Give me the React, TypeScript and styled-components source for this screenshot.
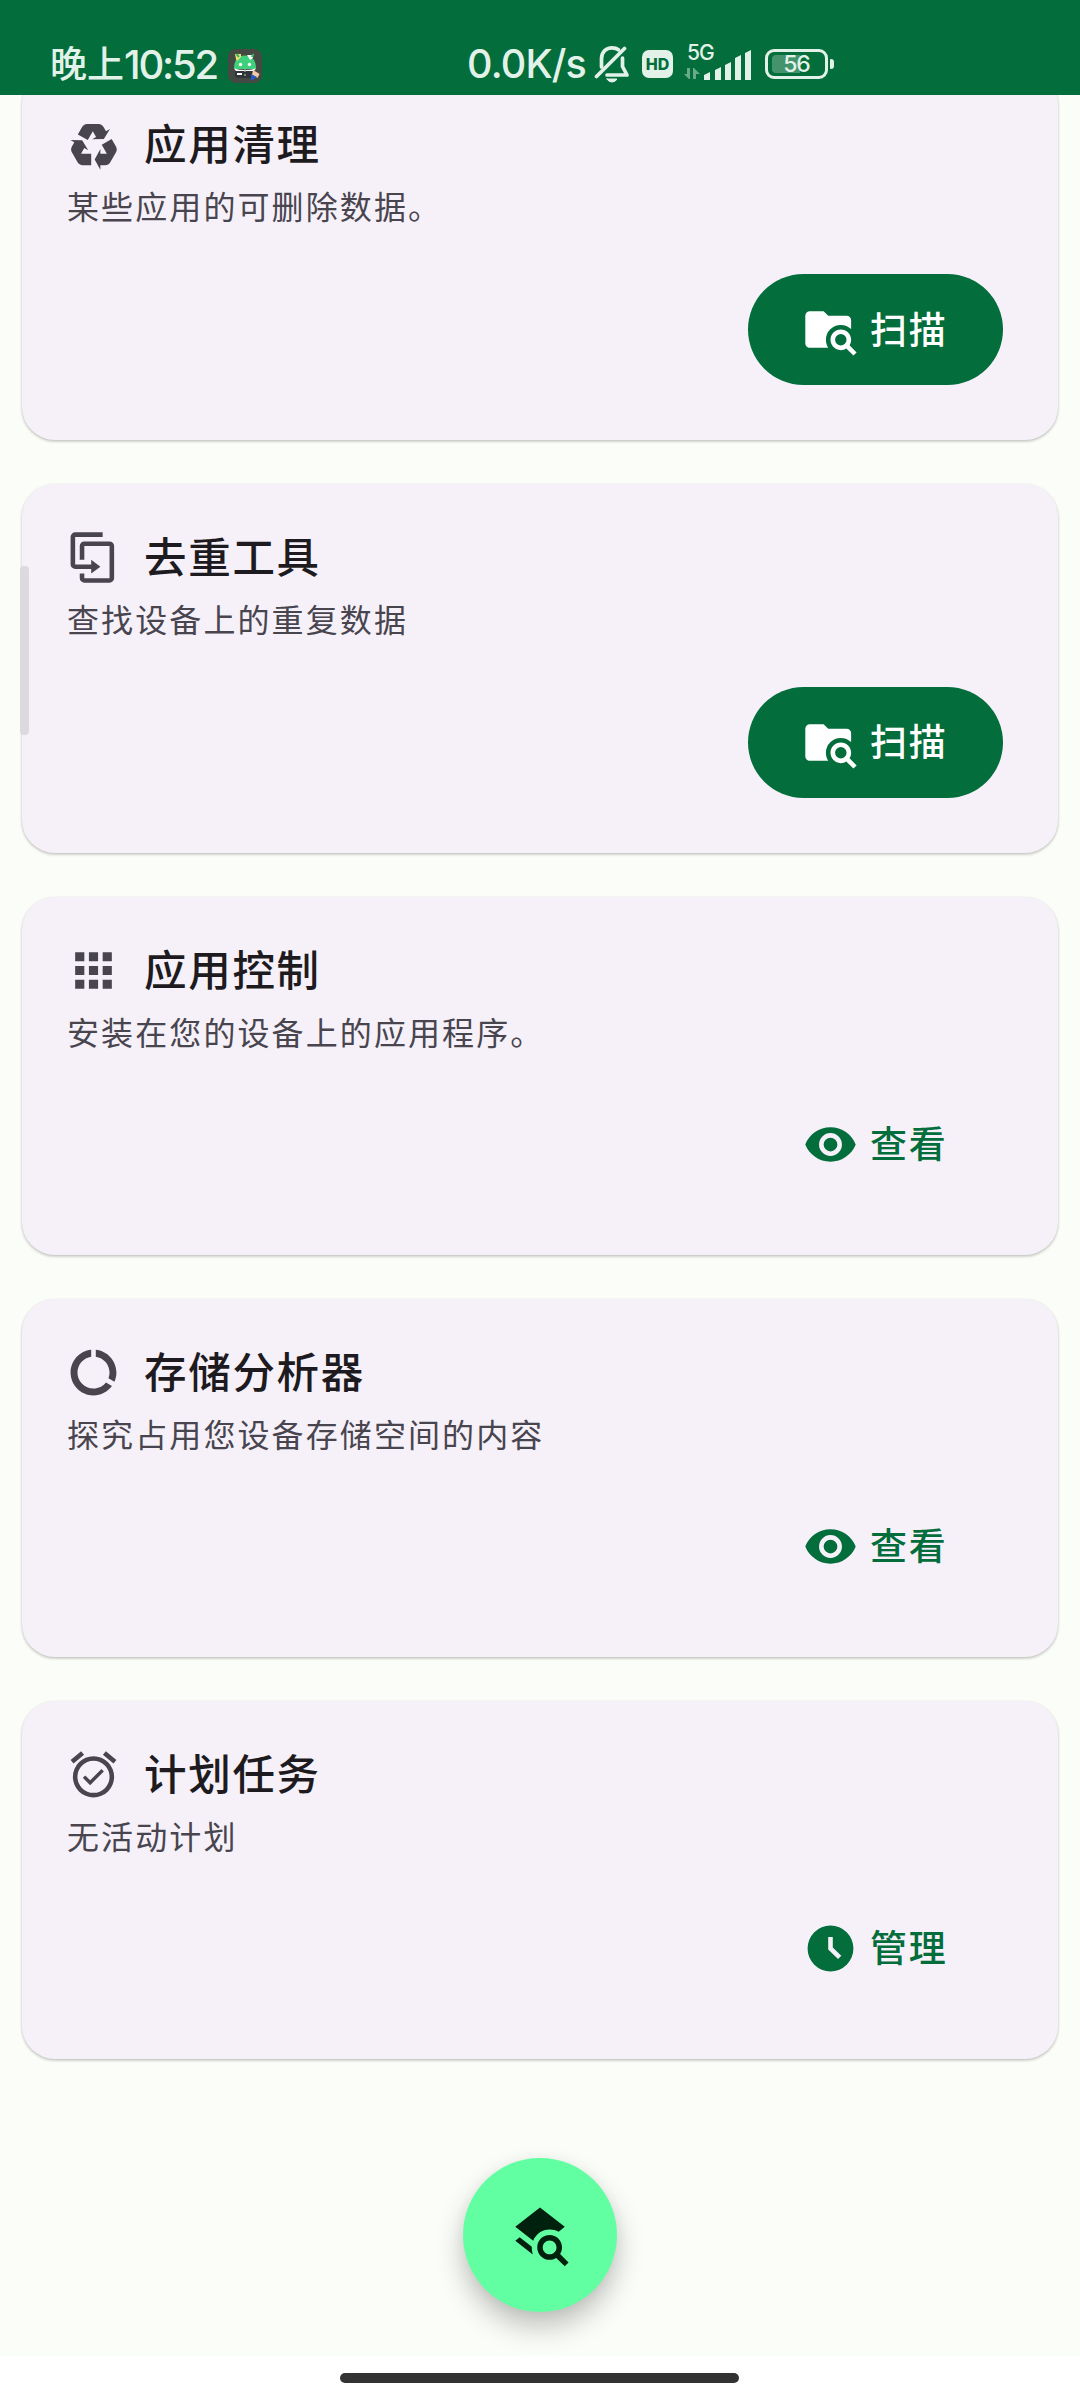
import React from "react";
import styled, { createGlobalStyle } from "styled-components";

const GlobalStyle = createGlobalStyle`
  * { box-sizing: border-box; }
  html, body { margin: 0; padding: 0; background: #fbfef8; }
  body { font-family: "Noto Sans CJK SC", "Noto Sans", sans-serif; overflow: hidden; }
`;

const Screen = styled.div`
  width: 1080px;
  height: 2400px;
  display: flex;
  flex-direction: column;
  background: #fbfef8;
  position: relative;
  overflow: hidden;
`;

const StatusBar = styled.header`
  flex: none;
  height: 95px;
  padding: 33px 50px 0 50px;
  display: flex;
  align-items: center;
  background: #036d3b;
  color: #e2f2e9;
  z-index: 2;
  white-space: nowrap;
  > * { flex: none; }
`;

const Clock = styled.div`
  display: flex;
  align-items: center;
  width: 178px;
  font-size: 37px;
  font-weight: 500;
  line-height: 40px;
`;

const ClockPeriod = styled.span`
  padding-bottom: 4px;
`;

const ClockDigits = styled.span`
  padding-top: 1px;
  font-family: Inter, sans-serif;
  font-size: 40px;
  letter-spacing: -2.2px;
`;

const Speed = styled.span`
  width: 127px;
  margin-left: 205px;
  font: 500 39.5px/40px Inter, sans-serif;
  letter-spacing: -0.8px;
`;

const HdBadge = styled.span`
  width: 31px;
  height: 28px;
  margin-left: 12px;
  border-radius: 7px;
  background: #e2f2e9;
  color: #036d3b;
  font: 800 16px/28px Inter, sans-serif;
  text-align: center;
`;

const Signal = styled.div`
  width: 68px;
  height: 36px;
  margin: -2px 0 0 11px;
  position: relative;
  svg { display: block; }
`;

const NetworkLabel = styled.span`
  position: absolute;
  left: 3px;
  top: -2px;
  font: 500 21px/20px Inter, sans-serif;
  letter-spacing: -1px;
`;

const Battery = styled.div`
  width: 63px;
  height: 30px;
  margin-left: 13px;
  border: 3px solid #e2f2e9;
  border-radius: 9px;
  padding: 3px 4px;
  position: relative;
  &::after {
    content: "";
    position: absolute;
    right: -9px;
    top: 7px;
    width: 4px;
    height: 10px;
    border-radius: 1px 3px 3px 1px;
    background: #e2f2e9;
  }
`;

const BatteryLevel = styled.div`
  width: 28px;
  height: 18px;
  border-radius: 4px 0 0 4px;
  background: #44936c;
`;

const BatteryText = styled.span`
  position: absolute;
  inset: 0;
  text-align: center;
  font: 500 23px/25px Inter, sans-serif;
  letter-spacing: -1.2px;
`;

const List = styled.main`
  flex: 1;
  display: flex;
  flex-direction: column;
  gap: 44px;
  padding: 0 22px;
  margin-top: -24px;
`;

const Card = styled.section<{ $height: number }>`
  flex: none;
  height: ${(p) => p.$height}px;
  padding: 46px 55px 55px 44px;
  border-radius: 33px;
  background: #f6f1f9;
  box-shadow: 0 1px 3px rgba(0, 0, 0, 0.2), 0 2px 3px rgba(0, 0, 0, 0.08);
  display: flex;
  flex-direction: column;
`;

const CardHead = styled.div`
  display: flex;
  align-items: center;
  gap: 23px;
  height: 55px;
  color: #49454f;
`;

const Title = styled.h2`
  margin: 0;
  padding-bottom: 6px;
  color: #1d1b20;
  font-size: 42.5px;
  line-height: 55px;
  font-weight: 500;
  letter-spacing: 1.7px;
`;

const Subtitle = styled.p`
  margin: 10px 0 0 1px;
  color: #49454f;
  font-size: 32px;
  line-height: 46px;
  font-weight: 400;
  letter-spacing: 2.1px;
`;

const Action = styled.button<{ $filled?: boolean }>`
  align-self: flex-end;
  margin-top: auto;
  width: 255px;
  height: 111px;
  padding: 0 0 0 55px;
  border: 0;
  border-radius: 56px;
  display: flex;
  align-items: center;
  gap: 12px;
  background: ${(p) => (p.$filled ? "#036d3b" : "transparent")};
  color: ${(p) => (p.$filled ? "#ffffff" : "#036d3b")};
  font: 500 37px/50px "Noto Sans CJK SC", sans-serif;
  letter-spacing: 1.7px;
  white-space: nowrap;
  svg { flex: none; }
`;

const ActionLabel = styled.span`
  padding-bottom: 4px;
`;

const EdgeHandle = styled.div`
  position: absolute;
  left: 20px;
  top: 566px;
  width: 9px;
  height: 169px;
  border-radius: 4px;
  background: #dddadf;
`;

const Fab = styled.button`
  position: absolute;
  left: 463px;
  top: 2158px;
  width: 154px;
  height: 154px;
  border: 0;
  padding: 0;
  border-radius: 50%;
  background: #61ffa1;
  color: #00210e;
  display: flex;
  align-items: center;
  justify-content: center;
  box-shadow: 0 15px 28px rgba(0, 0, 0, 0.24), 0 2px 14px rgba(0, 0, 0, 0.05);
`;

const NavigationBar = styled.footer`
  flex: none;
  height: 44px;
  background: #ffffff;
  display: flex;
  justify-content: center;
  padding: 17px 2px 0 0;
`;

const HomePill = styled.div`
  width: 399px;
  height: 10px;
  border-radius: 5px;
  background: #333333;
`;

const paths = {
  recycle:
    "M21.82,15.42L19.32,19.75C18.83,20.61 17.92,21.06 17,21H15V23L12.5,18.5L15,14V16H17.82L15.6,12.15L19.93,9.65L21.73,12.77C22.25,13.54 22.32,14.57 21.82,15.42M9.21,3.06H14.21C15.19,3.06 16.04,3.63 16.45,4.45L17.45,6.19L19.18,5.19L16.54,9.6L11.39,9.69L13.12,8.69L11.71,6.24L9.5,10.09L5.16,7.59L6.96,4.47C7.37,3.64 8.22,3.06 9.21,3.06M5.05,19.76L2.55,15.43C2.06,14.58 2.13,13.56 2.64,12.79L3.64,11.06L1.91,10.06L7.05,10.14L9.7,14.56L7.97,13.56L6.56,16H11V21H7.4C6.47,21.07 5.55,20.61 5.05,19.76Z",
  duplicate:
    "M11,17H4A2,2 0 0,1 2,15V3A2,2 0 0,1 4,1H16V3H4V15H11V13L15,16L11,19V17M19,21V7H8V13H6V7A2,2 0 0,1 8,5H19A2,2 0 0,1 21,7V21A2,2 0 0,1 19,23H8A2,2 0 0,1 6,21V19H8V21H19Z",
  apps: "M4,4H8V8H4ZM10,4H14V8H10ZM16,4H20V8H16ZM4,10H8V14H4ZM10,10H14V14H10ZM16,10H20V14H16ZM4,16H8V20H4ZM10,16H14V20H10ZM16,16H20V20H16Z",
  usage:
    "M13 2.05v3.03c3.39.49 6 3.39 6 6.92 0 .9-.18 1.75-.48 2.54l2.6 1.53c.56-1.24.88-2.62.88-4.07 0-5.18-3.95-9.45-9-9.95zM12 19c-3.87 0-7-3.13-7-7 0-3.53 2.61-6.43 6-6.92V2.05c-5.06.5-9 4.76-9 9.95 0 5.52 4.47 10 9.99 10 3.31 0 6.24-1.61 8.06-4.09l-2.6-1.53C16.17 17.98 14.21 19 12 19z",
  alarm:
    "M10.54,14.53L8.41,12.4L7.35,13.46L10.53,16.64L16.53,10.64L15.47,9.58L10.54,14.53M12,20A7,7 0 0,1 5,13A7,7 0 0,1 12,6A7,7 0 0,1 19,13A7,7 0 0,1 12,20M12,4A9,9 0 0,0 3,13A9,9 0 0,0 12,22A9,9 0 0,0 21,13A9,9 0 0,0 12,4M7.88,3.39L6.6,1.86L2,5.71L3.29,7.24L7.88,3.39M22,5.72L17.4,1.86L16.11,3.39L20.71,7.25L22,5.72Z",
  folderSearch:
    "M16.5,12C19,12 21,14 21,16.5C21,17.38 20.75,18.21 20.31,18.9L23.39,22L22,23.39L18.88,20.32C18.19,20.75 17.37,21 16.5,21C14,21 12,19 12,16.5C12,14 14,12 16.5,12M16.5,14A2.5,2.5 0 0,0 14,16.5A2.5,2.5 0 0,0 16.5,19A2.5,2.5 0 0,0 19,16.5A2.5,2.5 0 0,0 16.5,14M9,4L11,6H19A2,2 0 0,1 21,8V11.81C19.83,10.69 18.25,10 16.5,10A6.5,6.5 0 0,0 10,16.5C10,17.79 10.37,19 11,20H3C1.89,20 1,19.1 1,18V6C1,4.89 1.89,4 3,4H9Z",
  eye: "M12,9A3,3 0 0,0 9,12A3,3 0 0,0 12,15A3,3 0 0,0 15,12A3,3 0 0,0 12,9M12,17A5,5 0 0,1 7,12A5,5 0 0,1 12,7A5,5 0 0,1 17,12A5,5 0 0,1 12,17M12,4.5C7,4.5 2.73,7.61 1,12C2.73,16.39 7,19.5 12,19.5C17,19.5 21.27,16.39 23,12C21.27,7.61 17,4.5 12,4.5Z",
  clock:
    "M12,2A10,10 0 1,0 12,22A10,10 0 1,0 12,2ZM11,7H13V11.6L16.7,15.2L15.3,16.6L11,12.4Z",
  layersSearch:
    "M19.31,18.9L22.39,22L21,23.39L17.88,20.32C17.19,20.75 16.37,21 15.5,21C13,21 11,19 11,16.5C11,14 13,12 15.5,12C18,12 20,14 20,16.5C20,17.38 19.75,18.21 19.31,18.9M15.5,19C16.88,19 18,17.88 18,16.5C18,15.12 16.88,14 15.5,14C14.12,14 13,15.12 13,16.5C13,17.88 14.12,19 15.5,19M21,9L12,2L3,9L9.52,14.07C10.5,11.67 12.8,10 15.5,10C16.7,10 17.8,10.3 18.8,10.8ZM4.62,12.81L3,14.07L9.38,19.05C9.13,18.25 9,17.4 9,16.5L9.02,16.24Z",
};

type IconName = keyof typeof paths;

const Icon = ({ name, size = 55 }: { name: IconName; size?: number }) => (
  <svg width={size} height={size} viewBox="0 0 24 24" fill="currentColor" fillRule="evenodd">
    <path d={paths[name]} />
  </svg>
);

const cards: { icon: IconName; title: string; text: string; action: string; actionIcon: IconName; filled?: boolean; height: number }[] = [
  { icon: "recycle", title: "应用清理", text: "某些应用的可删除数据。", action: "扫描", actionIcon: "folderSearch", filled: true, height: 369 },
  { icon: "duplicate", title: "去重工具", text: "查找设备上的重复数据", action: "扫描", actionIcon: "folderSearch", filled: true, height: 368.5 },
  { icon: "apps", title: "应用控制", text: "安装在您的设备上的应用程序。", action: "查看", actionIcon: "eye", height: 358 },
  { icon: "usage", title: "存储分析器", text: "探究占用您设备存储空间的内容", action: "查看", actionIcon: "eye", height: 358 },
  { icon: "alarm", title: "计划任务", text: "无活动计划", action: "管理", actionIcon: "clock", height: 358 },
];

const AppBadgeDrawing = styled.svg`
  margin-top: 3px;
`;

const AppBadge = () => (
  <AppBadgeDrawing width="34" height="34" viewBox="0 0 34 34">
    <rect width="34" height="34" rx="8" fill="#444a42" />
    <path d="M6 20C6 11 10 6.5 17 6.5s11 4.5 11 13.5z" fill="#3fd07c" />
    <path d="M6 19.5q11 3 22 0l-2 2.5q-9 1.500-18 0z" fill="#fff" />
    <path d="M7 22h20v4q-1 3-4 3H11q-4 0-4-3z" fill="#30353a" />
    <path d="M7 5l6 0v3l-4 4-1-2z" fill="#f1e36c" />
    <path d="M19 6h6v3l-3 2z" fill="#f3fff5" />
    <path d="M8.5 5l2.5 3M25.5 5l-1.5 3" stroke="#37b568" strokeWidth="2" />
    <circle cx="12.5" cy="15.5" r="1.7" fill="#fff" />
    <circle cx="21.5" cy="15.5" r="1.7" fill="#fff" />
    <rect x="9" y="24" width="5" height="2" fill="#fff" />
    <path d="M17 20v3M17 25v2" stroke="#aaa" strokeWidth="1.3" />
    <path d="M25 21l6.5 4-2 4-5.5-3z" fill="#f4c9a4" />
    <path d="M23 25l6 3-6 4z" fill="#2558c9" />
  </AppBadgeDrawing>
);

const BellOff = () => (
  <svg width="36" height="40" viewBox="0 0 36 40" fill="none" stroke="#e2f2e9" strokeWidth="3.7" strokeLinecap="round" strokeLinejoin="round">
    <path d="M7.5 23V15C7.5 8 12 3.8 18 3.8c3 0 5 .8 6.5 2" />
    <path d="M28.5 14V22.5l4.5 8.5H13" />
    <path d="M30.5 4.5L2.5 32.5" />
    <path d="M13 35h10q-1.5 3-5 3t-5-3z" fill="#e2f2e9" strokeWidth="1" />
  </svg>
);

export default function App() {
  return (
    <Screen>
      <GlobalStyle />
      <StatusBar>
        <Clock>
          <ClockPeriod>晚上</ClockPeriod>
          <ClockDigits>10:52</ClockDigits>
        </Clock>
        <AppBadge />
        <Speed>0.0K/s</Speed>
        <BellOff />
        <HdBadge>HD</HdBadge>
        <Signal>
          <NetworkLabel>5G</NetworkLabel>
          <svg width="68" height="36" viewBox="0 0 68 36" fill="#e2f2e9">
            <path d="M0 29h3v-6h3v11h-1zM9 34V23h1l6 6h-4v5z" opacity=".45" />
            <path d="M20 35v-5l6-3v8zM31 35V25l6-3v13zM41 35V20l6-3v18zM51 35V13l6-3v25zM61 35V8l6-3v30z" />
          </svg>
        </Signal>
        <Battery>
          <BatteryLevel />
          <BatteryText>56</BatteryText>
        </Battery>
      </StatusBar>
      <List>
        {cards.map((c) => (
          <Card key={c.title} $height={c.height}>
            <CardHead>
              <Icon name={c.icon} />
              <Title>{c.title}</Title>
            </CardHead>
            <Subtitle>{c.text}</Subtitle>
            <Action $filled={c.filled}>
              <Icon name={c.actionIcon} />
              <ActionLabel>{c.action}</ActionLabel>
            </Action>
          </Card>
        ))}
      </List>
      <EdgeHandle />
      <Fab>
        <Icon name="layersSearch" size={66} />
      </Fab>
      <NavigationBar>
        <HomePill />
      </NavigationBar>
    </Screen>
  );
}
